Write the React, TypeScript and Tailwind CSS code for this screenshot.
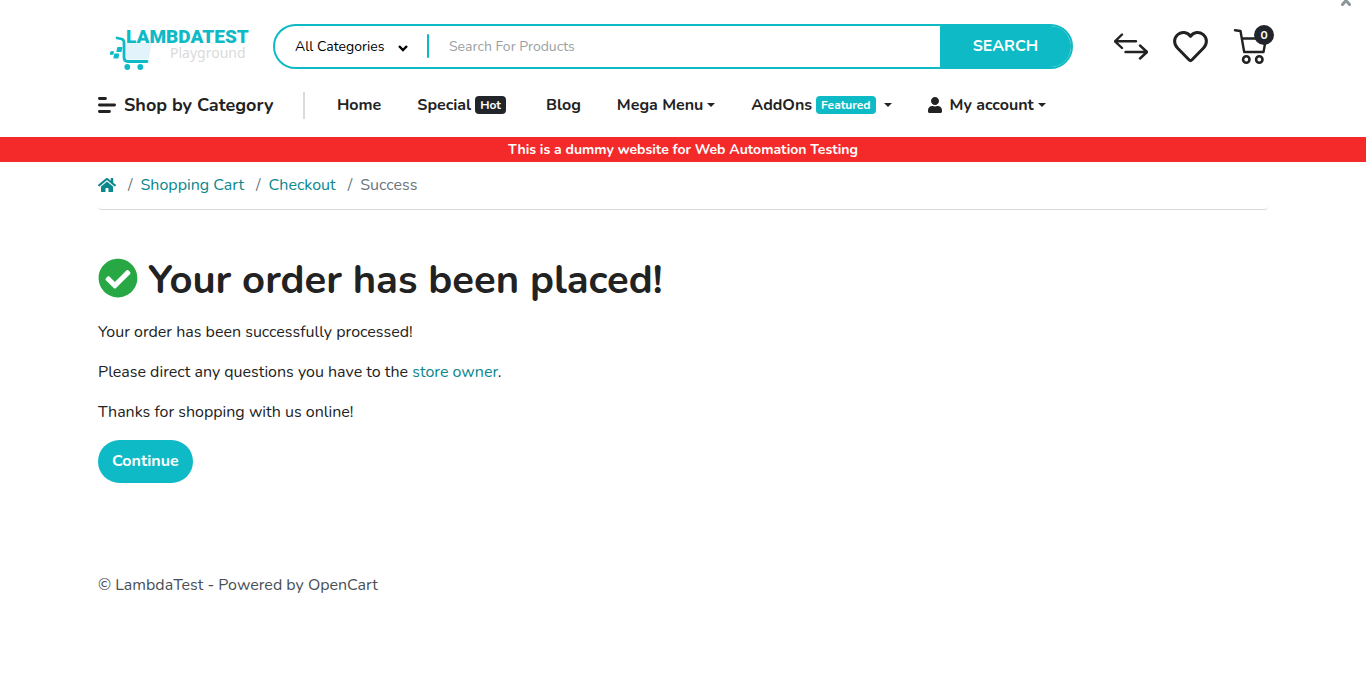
import type { ReactNode } from "react";
import { FaCheckCircle, FaHome, FaUser } from "react-icons/fa";

function Logo() {
  return (
    <svg width="152" height="50" viewBox="98 21 152 50" role="img" aria-label="LambdaTest Playground">
      <path d="M125.500 43H151.500L149 58.500Q148.500 59.500 146 59.500H125.500Z" fill="#e3f3fb" />
      <path
        d="M117 38L121.500 39Q124 39.500 124 42.500V57Q124 61.500 128 61.500H147"
        fill="none"
        stroke="#0ebac5"
        strokeWidth="2.800"
        strokeLinecap="round"
        strokeLinejoin="round"
      />
      <g fill="#0ebac5">
        <circle cx="127.300" cy="67" r="2.900" />
        <circle cx="140.300" cy="67" r="2.900" />
        <path
          d="M117.800 47.500h4l-.8 4h-4z M114.800 54h3.800l-.7 3.800h-3.900z M111 51.800h2.400l-.5 2.400h-2.500z"
          stroke="#0ebac5"
          strokeWidth="1.200"
          strokeLinejoin="round"
        />
        <text x="126" y="43" fontFamily="Roboto, sans-serif" fontWeight="900" fontSize="19">
          LAMBDATEST
        </text>
      </g>
      <text x="170" y="58" fill="#dadada" fontFamily="'Noto Sans', sans-serif" fontSize="14">
        Playground
      </text>
    </svg>
  );
}

function Caret() {
  return <span className="ml-1 inline-block border-x-4 border-t-4 border-x-transparent border-t-[#212529] align-middle" />;
}

function NavItem({ children }: { children: ReactNode }) {
  return (
    <li>
      <a href="#" className="flex items-center whitespace-nowrap">
        {children}
      </a>
    </li>
  );
}

function SearchBar() {
  return (
    <form className="flex h-[45px] w-[800px] shrink overflow-hidden rounded-full border-2 border-[#0ebac5] bg-white" onSubmit={(e) => e.preventDefault()}>
      <div className="relative flex w-[152px] items-center">
        <select aria-label="Category" className="h-full w-full appearance-none bg-transparent pt-[2px] pl-5 text-[14px] text-black outline-none">
          <option>All Categories</option>
        </select>
        <svg className="pointer-events-none absolute top-[18px] right-[19px]" width="10" height="8" viewBox="0 0 10 8" fill="none" stroke="#000" strokeWidth="2.400">
          <path d="M1 2L5 6L9 2" />
        </svg>
      </div>
      <span className="h-6 w-[2px] self-center rounded bg-[#0ebac5]" />
      <input aria-label="Search" placeholder="Search For Products" className="min-w-0 flex-1 px-5 pt-[2px] text-[14px] outline-none placeholder:text-[#9b9fa3]" />
      <button type="submit" className="w-[131px] bg-[#0ebac5] font-bold text-white">
        SEARCH
      </button>
    </form>
  );
}

function HeaderIcons() {
  const stroke = { fill: "none", stroke: "#222", strokeLinecap: "round", strokeLinejoin: "round" } as const;
  return (
    <div className="ml-auto flex items-center gap-6">
      <a href="#" aria-label="Compare">
        <svg width="34" height="36" viewBox="1114 28 34 36" {...stroke} strokeWidth="2.400">
          <path d="M1122 34.500L1115 41.300L1122 48M1115 41.300H1136M1140 45.500L1147 52L1140 58.500M1147 52H1125.500" />
        </svg>
      </a>
      <a href="#" aria-label="Wish list">
        <svg width="36" height="36" viewBox="1172 28 36 36" {...stroke} strokeWidth="3">
          <path d="M1190.500 36.300C1187 31.600 1181.500 31.700 1178 34.400C1173.500 38 1173.600 44 1177.500 48L1189.200 60Q1190.500 61.200 1191.800 60L1203.500 48C1207.400 44 1207.500 38 1203 34.400C1199.500 31.700 1194 31.600 1190.500 36.300Z" />
        </svg>
      </a>
      <a href="#" aria-label="Cart" className="relative">
        <svg width="36" height="36" viewBox="1232 28 36 36" {...stroke} strokeWidth="2.400">
          <path d="M1235 30.200L1240.500 31L1244.200 52H1263.500L1266 38.500H1242" />
          <circle cx="1246.300" cy="59.500" r="3.200" strokeWidth="2.600" />
          <circle cx="1259.300" cy="59.500" r="3.200" strokeWidth="2.600" />
        </svg>
        <span className="absolute -top-[3px] -right-[6px] flex size-5 items-center justify-center rounded-full bg-[#212529] text-[12px] font-bold text-white">0</span>
      </a>
    </div>
  );
}

export default function App() {
  return (
    <div className="relative overflow-hidden bg-white font-['Nunito','Lato',sans-serif] text-[16px] leading-6 text-[#222]">
      <button aria-label="Close" className="absolute -top-[5px] right-[15px]">
        <svg width="10" height="11" viewBox="0 0 10 11" stroke="#8b9698" strokeWidth="3" strokeLinecap="round">
          <path d="M1.500 1.500L8.500 9.500M8.500 1.500L1.500 9.500" />
        </svg>
      </button>

      <header className="mx-auto max-w-[1200px] px-[15px]">
        <div className="flex items-center pt-[21px]">
          <a href="#" className="mr-[23px] shrink-0">
            <Logo />
          </a>
          <SearchBar />
          <HeaderIcons />
        </div>
        <nav className="flex h-[66px] items-center pt-[2px] font-bold">
          <button className="flex w-[207px] items-center gap-2 border-r-2 border-[#dadada] text-left text-[18px] leading-[27px]">
            <svg width="18" height="16" viewBox="0 0 18 16" stroke="#222" strokeWidth="2.800" strokeLinecap="round">
              <path d="M1.400 1.500H7.500M1.400 8H16.600M1.400 14.500H11.500" />
            </svg>
            Shop by Category
          </button>
          <ul className="ml-8 flex items-center gap-9">
            <NavItem>Home</NavItem>
            <NavItem>
              Special
              <span className="mr-1 ml-1 rounded bg-[#212529] px-[5px] text-[12px] leading-[18px] text-white">Hot</span>
            </NavItem>
            <NavItem>Blog</NavItem>
            <NavItem>
              Mega Menu
              <Caret />
            </NavItem>
            <NavItem>
              AddOns
              <span className="mr-1 ml-1 rounded bg-[#0ebac5] px-[5px] text-[12px] leading-[18px] text-white">Featured</span>
              <Caret />
            </NavItem>
            <NavItem>
              <FaUser className="mr-2 h-4 w-[14px]" />
              My account
              <Caret />
            </NavItem>
          </ul>
        </nav>
      </header>

      <p className="bg-[#f42929] text-center text-[14px] leading-[25px] font-bold text-white">This is a dummy website for Web Automation Testing</p>

      <main className="mx-auto max-w-[1200px] px-[15px]">
        <nav aria-label="Breadcrumb" className="rounded border-b border-[#dadada]">
          <ol className="flex h-[47px] items-center pb-[2px] text-[#0b878e]">
            <li>
              <a href="#" aria-label="Home">
                <FaHome className="size-[18px]" />
              </a>
            </li>
            <li className="ml-3">
              <span className="mr-2 text-[#6c757d]">/</span>
              <a href="#">Shopping Cart</a>
            </li>
            <li className="ml-3">
              <span className="mr-2 text-[#6c757d]">/</span>
              <a href="#">Checkout</a>
            </li>
            <li className="ml-3 text-[#6c757d]">
              <span className="mr-2">/</span>Success
            </li>
          </ol>
        </nav>

        <h1 className="mt-11 mb-[14px] flex items-start gap-[10px] text-[40px] leading-[52px] font-bold">
          <FaCheckCircle className="mt-1 size-10 text-[#28a745]" />
          Your order has been placed!
        </h1>
        <p className="mb-4">Your order has been successfully processed!</p>
        <p className="mb-4">
          Please direct any questions you have to the{" "}
          <a href="#" className="text-[#0b878e]">
            store owner
          </a>
          .
        </p>
        <p className="mb-4">Thanks for shopping with us online!</p>
        <a href="#" className="inline-block rounded-full bg-[#0ebac5] px-[14px] leading-[43px] font-bold text-white">
          Continue
        </a>
      </main>

      <footer className="mx-auto mt-[90px] max-w-[1200px] px-[15px] text-[#495057]">© LambdaTest - Powered by OpenCart</footer>
    </div>
  );
}
